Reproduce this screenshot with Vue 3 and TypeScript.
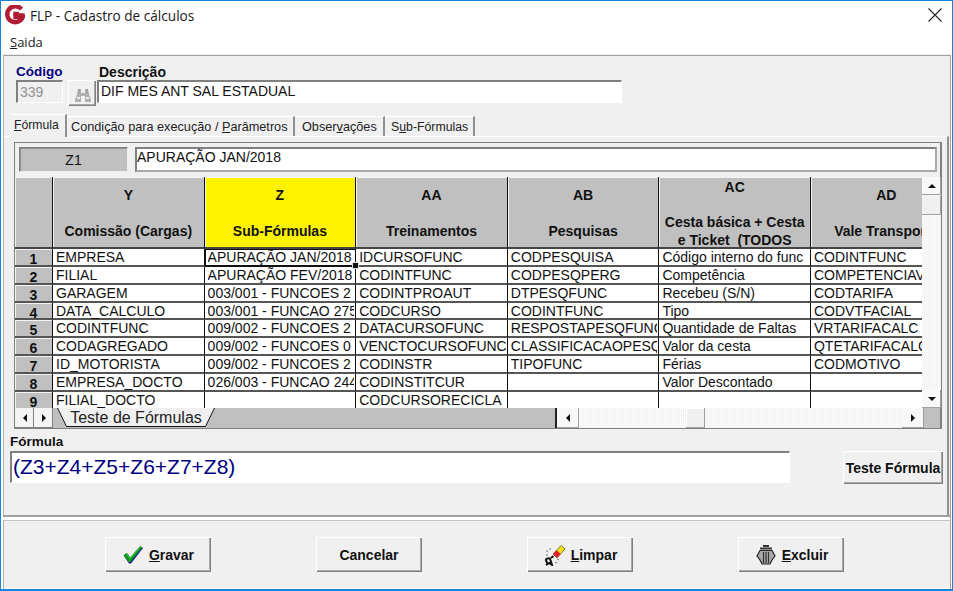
<script setup lang="ts">
interface Col { head: string[]; cells: string[] }
const cols: Col[] = [
  { head: ['Y', '', 'Comissão (Cargas)'], cells: ['EMPRESA','FILIAL','GARAGEM','DATA_CALCULO','CODINTFUNC','CODAGREGADO','ID_MOTORISTA','EMPRESA_DOCTO','FILIAL_DOCTO'] },
  { head: ['Z', '', 'Sub-Fórmulas'], cells: ['APURAÇÃO JAN/2018','APURAÇÃO FEV/2018','003/001 - FUNCOES 2','003/001 - FUNCAO 275','009/002 - FUNCOES 2','009/002 - FUNCOES 0','009/002 - FUNCOES 2','026/003 - FUNCAO 244',''] },
  { head: ['AA', '', 'Treinamentos'], cells: ['IDCURSOFUNC','CODINTFUNC','CODINTPROAUT','CODCURSO','DATACURSOFUNC','VENCTOCURSOFUNC','CODINSTR','CODINSTITCUR','CODCURSORECICLA'] },
  { head: ['AB', '', 'Pesquisas'], cells: ['CODPESQUISA','CODPESQPERG','DTPESQFUNC','CODINTFUNC','RESPOSTAPESQFUNC','CLASSIFICACAOPESQ','TIPOFUNC','',''] },
  { head: ['AC', '', 'Cesta básica + Cesta', 'e Ticket  (TODOS'], cells: ['Código interno do func','Competência','Recebeu (S/N)','Tipo','Quantidade de Faltas','Valor da cesta','Férias','Valor Descontado',''] },
  { head: ['AD', '', 'Vale Transporte'], cells: ['CODINTFUNC','COMPETENCIAVT','CODTARIFA','CODVTFACIAL','VRTARIFACALC','QTETARIFACALC','CODMOTIVO','',''] },
]
const rowNums = [1, 2, 3, 4, 5, 6, 7, 8, 9]
</script>

<template>
  <div class="window">
    <header class="titlebar">
      <svg class="logo" width="20" height="20" viewBox="0 0 20 20">
        <path d="M16.5 4.2A8 8 0 1 0 17.8 12H10.6V9H14" fill="none" stroke="#b01c34" stroke-width="4.4" />
        <path d="M8.5 8.2H20L18.6 11H8.5z" fill="#b01c34" />
      </svg>
      <span class="title">FLP - Cadastro de cálculos</span>
      <svg class="close" width="14" height="14" viewBox="0 0 14 14">
        <path d="M0.5 0.5L13.5 13.5M13.5 0.5L0.5 13.5" stroke="#222" stroke-width="1.1" fill="none" />
      </svg>
    </header>
    <nav class="menu"><span><u>S</u>aida</span></nav>

    <main class="client">
      <section class="fields">
        <div class="field code">
          <label class="lbl-code">Código</label>
          <div class="edit edit-code">339</div>
        </div>
        <button class="btn find">
          <svg width="18" height="15" viewBox="0 0 18 15">
            <path d="M4 1h3v4h4V1h3l1 5 2 6v2h-6V8H7v6H1v-2l2-6z" fill="#b0b0b0" />
            <path d="M3 10h3M12 10h3" stroke="#ececec" stroke-width="2" />
            <path d="M5 1v4M13 1v4" stroke="#969696" stroke-width="1" />
          </svg>
        </button>
        <div class="field desc">
          <label class="lbl-desc">Descrição</label>
          <div class="edit edit-desc">DIF MES ANT SAL ESTADUAL</div>
        </div>
      </section>

      <div class="tabs">
        <div class="tab active"><u>F</u>órmula</div>
        <div class="tab t2">Condição para execução / <u>P</u>arâmetros</div>
        <div class="tab t3">Obser<u>v</u>ações</div>
        <div class="tab t4">S<u>u</u>b-Fórmulas</div>
      </div>

      <section class="page">
        <div class="frame">
          <div class="cellbar">
            <div class="cellname">Z1</div>
            <div class="celltext">APURAÇÃO JAN/2018</div>
          </div>

          <div class="sheet">
            <div class="sheet-top">
              <div class="gridview">
                <div class="gridcol rowheads">
                  <div class="hd hd-corner"></div>
                  <div v-for="n in rowNums" :key="n" class="rowhead">{{ n }}</div>
                </div>
                <div v-for="(c, ci) in cols" :key="ci" class="gridcol">
                  <div class="hd" :class="{ yellow: ci === 1 }">
                    <div v-for="(h, hi) in c.head" :key="hi" class="hdline">{{ h }}</div>
                  </div>
                  <div v-for="(t, ri) in c.cells" :key="ri" class="cell" :class="{ sel: ci === 1 && ri === 0 }">
                    <span class="celltxt">{{ t }}</span>
                    <i v-if="ci === 1 && ri === 0" class="handle"></i>
                  </div>
                </div>
              </div>
              <div class="vscroll">
                <div class="sbtn"><i class="tri up"></i></div>
                <div class="sbtn vthumb"></div>
                <div class="track"></div>
                <div class="sbtn"><i class="tri down"></i></div>
              </div>
            </div>
            <div class="sheet-bottom">
              <div class="nav">
                <div class="navbtn"><i class="tri left"></i></div>
                <div class="navbtn"><i class="tri right"></i></div>
              </div>
              <div class="sheettab">
                <svg class="tabshape" width="158" height="19" viewBox="0 0 158 19">
                  <path d="M0.5 0L9.5 18.5H148.5L157.5 0" fill="#f0f0f0" stroke="#111" stroke-width="1" />
                </svg>
                <span class="sheettab-label">Teste de Fórmulas</span>
              </div>
              <div class="strip"></div>
              <div class="hscroll">
                <div class="sbtn h"><i class="tri left"></i></div>
                <div class="track h1"></div>
                <div class="sbtn hthumb"></div>
                <div class="track"></div>
                <div class="sbtn h"><i class="tri right"></i></div>
              </div>
              <div class="corner"></div>
            </div>
          </div>
        </div>

        <div class="formula">
          <label class="lbl-formula">Fórmula</label>
          <div class="formula-row">
            <div class="edit edit-formula">(Z3+Z4+Z5+Z6+Z7+Z8)</div>
            <button class="btn test">Teste Fórmula</button>
          </div>
        </div>
      </section>

      <div class="separator"></div>

      <footer class="actions">
        <button class="btn act">
          <svg width="23" height="20" viewBox="0 0 22 20">
            <path d="M1.5 11L5 8.5L8 13L18 1.5L20.5 3L8.5 18.5H6.5z" fill="#1c1c9c" />
            <path d="M1 10L4.5 8L7.5 12.5L17.5 1L19.5 2.5L8 17L6 17z" fill="#0e9a18" />
            <path d="M4.5 9L7.5 13.5L17.5 2" fill="none" stroke="#3fd344" stroke-width="1" />
          </svg>
          <span><u>G</u>ravar</span>
        </button>
        <button class="btn act"><span>Cancelar</span></button>
        <button class="btn act">
          <svg width="24" height="22" viewBox="0 0 24 22">
            <path d="M10 10L18 1.5L22 5L14 14z" fill="#f3e21a" stroke="#4a4a20" stroke-width="0.7" />
            <path d="M10 10L13.5 6.2L17.5 9.8L14 14z" fill="#e01f2c" />
            <path d="M5 21L3 16.5C2.5 14 7 13.5 7.5 16L9 21L6.5 19L3 21" fill="none" stroke="#111" stroke-width="2" />
            <path d="M8 14L10.5 12" stroke="#111" stroke-width="2" />
            <path d="M4 6v2M7 4v2M3 11h2M12 18l2 1M14 15l2 1" stroke="#777" stroke-width="1" />
          </svg>
          <span><u>L</u>impar</span>
        </button>
        <button class="btn act">
          <svg width="24" height="22" viewBox="0 0 24 22">
            <path d="M9 2h6M6 4.5h12" stroke="#333" stroke-width="2" fill="none" />
            <path d="M6 6.5h12l3 5.5-3 4-2 4H8l-2-4-3-4z" fill="#a8a8a8" stroke="#222" stroke-width="1.2" />
            <path d="M9.5 8v11M12 8v11M14.5 8v11" stroke="#333" stroke-width="1.2" />
          </svg>
          <span><u>E</u>xcluir</span>
        </button>
      </footer>
    </main>
  </div>
</template>

<style>
html, body { margin: 0; padding: 0; background: #fff; }
</style>

<style scoped>
.window {
  box-sizing: border-box;
  width: 953px;
  height: 591px;
  overflow: hidden;
  background: #fff;
  border: 1px solid #1883d7;
  border-bottom-width: 2px;
  display: flex;
  flex-direction: column;
  font-family: "Liberation Sans", Arial, sans-serif;
  font-size: 14px;
  color: #111;
}
.titlebar {
  height: 28px;
  margin-bottom: 1px;
  flex: none;
  display: flex;
  align-items: center;
  padding: 0 10px 0 4px;
}
.logo { flex: none; }
.title {
  margin-left: 5px;
  font-family: "Open Sans", sans-serif;
  font-size: 13.6px;
  color: #1a1a1a;
  flex: 1;
}
.menu {
  height: 25px;
  flex: none;
  padding: 3px 0 0 9px;
  box-sizing: border-box;
  font-family: "Open Sans", sans-serif;
  font-size: 13px;
  color: #1a1a1a;
}
.client {
  flex: 1;
  min-height: 0;
  margin: 0 1px 0 2px;
  background: #f0f0f0;
  border-top: 1px solid #a0a0a0;
  border-left: 1px solid #b0b0b0;
  border-right: 1px solid #a0a0a0;
  box-shadow: 0 -1px 0 #eee;
  display: flex;
  flex-direction: column;
}
.fields {
  height: 58px;
  flex: none;
  box-sizing: border-box;
  padding: 8px 0 0 12px;
  display: flex;
  align-items: flex-start;
}
.field { display: flex; flex-direction: column; }
.lbl-code { color: #00007f; font-weight: bold; font-size: 13.5px; line-height: 16px; }
.lbl-desc { color: #111; font-weight: bold; font-size: 14px; line-height: 16px; margin-left: 2px; }
.edit {
  box-sizing: border-box;
  background: #fff;
  border-style: solid;
  border-width: 2px 1px 1px 2px;
  border-color: #808080 #fff #fff #808080;
  overflow: hidden;
  white-space: nowrap;
}
.edit-code {
  width: 47px;
  height: 23px;
  background: #f0f0f0;
  color: #909090;
  line-height: 20px;
  padding-left: 2px;
}
.find {
  width: 28px;
  height: 26px;
  margin: 16px 1px 0 5px;
  padding: 4px 0 0 2px;
}
.edit-desc {
  width: 525px;
  height: 23px;
  line-height: 19px;
  padding-left: 2px;
}
.btn {
  box-sizing: border-box;
  background: #f0f0f0;
  border: none;
  box-shadow: inset 1px 1px 0 #fff, inset -1px -1px 0 #808080, inset -2px -2px 0 #a8a8a8;
  font-family: "Liberation Sans", Arial, sans-serif;
  font-weight: bold;
  font-size: 14px;
  color: #111;
  display: flex;
  align-items: center;
  justify-content: center;
}
.tabs {
  height: 22px;
  flex: none;
  display: flex;
  padding-left: 7px;
  font-size: 12.7px;
  color: #222;
}
.tab {
  box-sizing: border-box;
  height: 21px;
  margin-top: 2px;
  padding: 3px 0 0 5px;
  border-right: 2px solid #909090;
  border-top: 1px solid #fff;
  white-space: nowrap;
}
.tab.active {
  width: 56px;
  height: 23px;
  margin-top: 0;
  padding: 3px 0 0 3px;
  background: #f0f0f0;
  font-size: 12.2px;
  position: relative;
  z-index: 1;
}
.t2 { width: 228px; padding-left: 4px; }
.t3 { width: 90px; padding-left: 7px; }
.t4 { width: 90px; padding-left: 6px; font-size: 12.3px; }
.page {
  height: 379px;
  flex: none;
  box-sizing: border-box;
  padding: 5px 0 0 10px;
  border-top: 1px solid #fff;
  border-right: 2px solid #909090;
  margin-right: 1px;
  display: flex;
  flex-direction: column;
}
.frame {
  box-sizing: border-box;
  width: 928px;
  height: 287px;
  flex: none;
  border: 1px solid #808080;
  border-right-width: 2px;
  background: #f0f0f0;
}
.cellbar {
  height: 34px;
  box-sizing: border-box;
  padding: 4px 3px 0 4px;
  display: flex;
  gap: 7px;
}
.cellname {
  box-sizing: border-box;
  width: 109px;
  height: 25px;
  background: #c0c0c0;
  border: 1px solid #808080;
  border-right-color: #eee;
  border-bottom-color: #eee;
  box-shadow: inset 1px 1px 0 #909090;
  text-align: center;
  line-height: 24px;
}
.celltext {
  box-sizing: border-box;
  flex: 1;
  height: 25px;
  background: #fff;
  border: 2px solid #808080;
  border-right-color: #a8a8a8;
  border-bottom-color: #a8a8a8;
  line-height: 17px;
  padding-left: 0;
}
.sheet { display: flex; flex-direction: column; }
.sheet-top { display: flex; height: 231px; }
.gridview {
  width: 907px;
  flex: none;
  height: 231px;
  overflow: hidden;
  display: flex;
  background: #fff;
}
.gridcol { width: 151.6px; flex: none; }
.rowheads { width: 38px; }
.hd {
  box-sizing: border-box;
  height: 72px;
  padding-top: 4px;
  background: #c0c0c0;
  border-right: 1px solid #111;
  border-bottom: 2px solid #444;
  box-shadow: inset 1px 1px 0 #f4f4f4;
  display: flex;
  flex-direction: column;
  justify-content: center;
  align-items: center;
  font-weight: bold;
  white-space: pre;
  overflow: hidden;
}
.hd.yellow { background: #fff200; }
.hdline { flex: none; height: 17.7px; line-height: 17.7px; }
.rowhead {
  box-sizing: border-box;
  height: 17.85px;
  background: #c0c0c0;
  border-right: 1px solid #111;
  border-bottom: 2px solid #555;
  box-shadow: inset 1px 1px 0 #f4f4f4;
  text-align: center;
  font-weight: bold;
  font-size: 14px;
  line-height: 20px;
  overflow: hidden;
}
.cell {
  box-sizing: border-box;
  height: 17.85px;
  position: relative;
  border-right: 1px solid #111;
  border-bottom: 2px solid #555;
  padding-left: 3px;
  line-height: 17px;
  white-space: nowrap;
}
.celltxt { display: block; overflow: hidden; height: 16px; margin-right: 1px; }
.cell.sel {
  outline: 1px solid #111;
  outline-offset: -1px;
  border-bottom-color: #111;
}
.handle {
  position: absolute;
  right: -4px;
  bottom: -4px;
  width: 5px;
  height: 5px;
  background: #111;
  border: 1px solid #ddd;
  z-index: 2;
}
.vscroll {
  width: 19px;
  flex: none;
  display: flex;
  flex-direction: column;
  background: #f0f0f0;
}
.sbtn {
  flex: none;
  width: 19px;
  height: 18px;
  box-sizing: border-box;
  background: #f8f8f8;
  box-shadow: inset -1px -1px 0 #a0a0a0;
  display: flex;
  align-items: center;
  justify-content: center;
}
.vthumb { height: 19px; margin-top: 1px; background: #f0f0f0; }
.track {
  flex: 1;
  background-color: #fafafa;
  background-image: linear-gradient(45deg, #ececec 25%, transparent 25%, transparent 75%, #ececec 75%);
  background-size: 2px 2px;
}
.tri { display: block; width: 0; height: 0; border-style: solid; border-color: transparent; }
.tri.up { border-width: 0 4px 4px; border-bottom-color: #111; }
.tri.down { border-width: 4px 4px 0; border-top-color: #111; }
.tri.left { border-width: 4px 4px 4px 0; border-right-color: #111; }
.tri.right { border-width: 4px 0 4px 4px; border-left-color: #111; }
.sheet-bottom {
  display: flex;
  height: 20px;
  background: #c0c0c0;
  border-bottom: 1px solid #808080;
}
.nav { display: flex; width: 38px; flex: none; }
.navbtn {
  flex: 1;
  background: #f4f4f4;
  box-shadow: inset -1px -1px 0 #808080;
  display: flex;
  align-items: center;
  justify-content: center;
}
.sheettab {
  width: 158px;
  flex: none;
  margin-left: 4px;
  position: relative;
  text-align: center;
  font-size: 16px;
  line-height: 20px;
  color: #222;
}
.tabshape { position: absolute; left: 0; top: 0; }
.sheettab-label { position: relative; }
.strip {
  width: 340px;
  flex: none;
  border-right: 2px solid #222;
}
.hscroll { width: 367px; flex: none; display: flex; background: #f0f0f0; }
.hscroll .h { width: 22px; height: 20px; }
.h1 { flex: none; width: 107px; }
.hthumb { width: 19px; height: 20px; background: #f0f0f0; box-shadow: inset -1px -1px 0 #a0a0a0, inset 1px 1px 0 #fff; }
.corner { flex: 1; background: #c0c0c0; }
.formula { margin-left: -4px; }
.lbl-formula { display: block; font-weight: bold; font-size: 13.5px; line-height: 16px; margin-top: 5px; }
.formula-row { display: flex; margin-top: 1px; }
.edit-formula {
  width: 780px;
  height: 32px;
  color: #00007f;
  font-size: 21px;
  line-height: 28px;
  padding-left: 1px;
}
.test {
  width: 100px;
  height: 33px;
  margin-left: 53px;
  white-space: nowrap;
  padding: 0;
}
.separator {
  height: 6px;
  flex: none;
  box-sizing: border-box;
  margin-left: -1px;
  border-top: 2px solid #a0a0a0;
  border-bottom: 1px solid #c4c4c4;
  background: #fff;
}
.actions {
  flex: 1;
  display: flex;
  gap: 105px;
  padding: 16px 0 0 101px;
  border-bottom: 1px solid #fff;
}
.act {
  width: 106px;
  height: 35px;
  gap: 4px;
  font-size: 14px;
}
</style>
